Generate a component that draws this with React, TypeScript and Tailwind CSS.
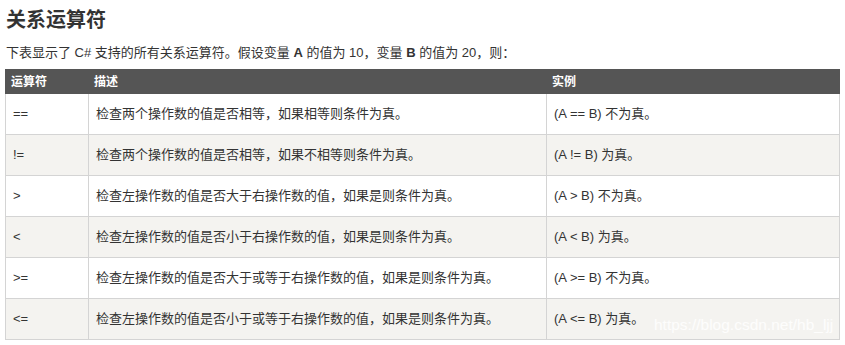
const rows = [
  { op: "==", desc: "检查两个操作数的值是否相等，如果相等则条件为真。", ex: "(A == B) 不为真。" },
  { op: "!=", desc: "检查两个操作数的值是否相等，如果不相等则条件为真。", ex: "(A != B) 为真。" },
  { op: ">", desc: "检查左操作数的值是否大于右操作数的值，如果是则条件为真。", ex: "(A > B) 不为真。" },
  { op: "<", desc: "检查左操作数的值是否小于右操作数的值，如果是则条件为真。", ex: "(A < B) 为真。" },
  { op: ">=", desc: "检查左操作数的值是否大于或等于右操作数的值，如果是则条件为真。", ex: "(A >= B) 不为真。" },
  { op: "<=", desc: "检查左操作数的值是否小于或等于右操作数的值，如果是则条件为真。", ex: "(A <= B) 为真。" },
];

const font = "font-['Liberation_Sans','Noto_Sans_CJK_SC',sans-serif]";

export default function App() {
  return (
    <div className={`relative w-[845px] h-[345px] bg-white text-[#333] ${font}`}>
      <h2 className="pl-[6px] pt-[7px] text-[20px] leading-[26px] font-bold text-[#333]">关系运算符</h2>
      <p className="pl-[6px] mt-[11px] text-[13px] leading-[18px]">
        下表显示了 C# 支持的所有关系运算符。假设变量 <b>A</b> 的值为 10，变量 <b>B</b> 的值为 20，则：
      </p>
      <table className="ml-[5px] mt-[7px] w-[834px] border-collapse text-[13px] table-fixed">
        <colgroup>
          <col className="w-[83px]" />
          <col className="w-[458px]" />
          <col className="w-[293px]" />
        </colgroup>
        <thead>
          <tr className="bg-[#555] text-white h-[24px]">
            <th className="text-left font-bold text-[12px] px-[5px] border border-[#555]">运算符</th>
            <th className="text-left font-bold text-[12px] px-[5px] border border-[#555]">描述</th>
            <th className="text-left font-bold text-[12px] px-[5px] border border-[#555]">实例</th>
          </tr>
        </thead>
        <tbody>
          {rows.map((r, i) => (
            <tr key={i} className={`h-[41px] ${i % 2 === 1 ? "bg-[#f4f3f0]" : "bg-white"}`}>
              <td className="px-[7px] border border-[#d4d4d4]">{r.op}</td>
              <td className="px-[7px] border border-[#d4d4d4]">{r.desc}</td>
              <td className="px-[7px] border border-[#d4d4d4]">{r.ex}</td>
            </tr>
          ))}
        </tbody>
      </table>
      <div className="absolute left-[654px] top-[315px] text-[15.5px] leading-[20px] text-white/80 font-['Liberation_Sans',sans-serif]">
        https://blog.csdn.net/hb_ljj
      </div>
    </div>
  );
}
